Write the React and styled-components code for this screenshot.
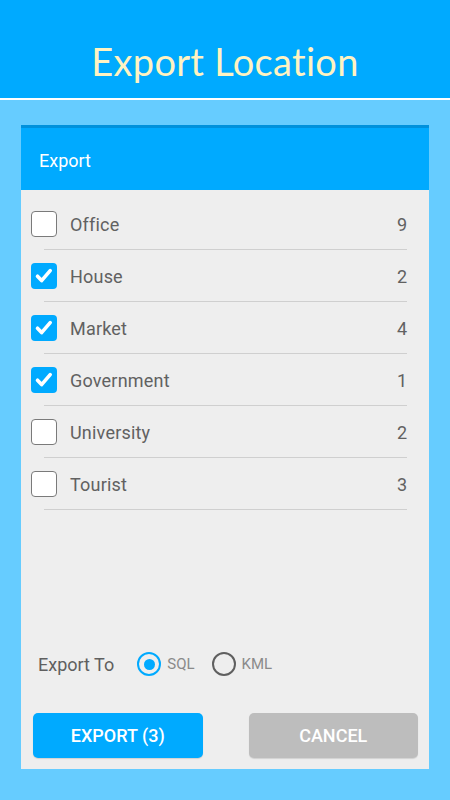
import React, { useState } from "react";
import styled, { createGlobalStyle } from "styled-components";

const Global = createGlobalStyle`
  html, body { margin: 0; padding: 0; }
  body { background: #66ccff; font-family: Roboto, "Noto Sans", sans-serif; }
  * { box-sizing: border-box; }
`;

const Page = styled.div`
  width: 450px;
  height: 800px;
  display: flex;
  flex-direction: column;
  background: #66ccff;
`;

const TopBar = styled.header`
  height: 100px;
  flex: none;
  background: #00aaff;
  border-bottom: 2px solid #ffffff;
  display: flex;
  justify-content: center;
  padding-top: 39px;
`;

const Title = styled.h1`
  margin: 0;
  height: 44px;
  line-height: 44px;
  font-family: Lato, "Open Sans", sans-serif;
  font-weight: 400;
  font-size: 38px;
  letter-spacing: 0.3px;
  color: #fff3c2;
`;

const Content = styled.main`
  flex: 1;
  display: flex;
  padding: 25px 21px 31px;
`;

const Card = styled.section`
  flex: 1;
  display: flex;
  flex-direction: column;
  background: #eeeeee;
`;

const CardHeader = styled.div`
  height: 65px;
  flex: none;
  background: #00aaff;
  border-top: 3px solid #0091dc;
  display: flex;
  align-items: center;
  padding: 3px 18px 0;
  font-size: 18px;
  color: #ffffff;
`;

const List = styled.ul`
  list-style: none;
  margin: 0;
  padding: 8px 0 0;
`;

const Item = styled.li`
  display: flex;
  flex-direction: column;
`;

const Row = styled.label`
  height: 51px;
  display: flex;
  align-items: center;
  padding: 0 22px 0 10px;
  cursor: pointer;
`;

const Box = styled.span`
  width: 26px;
  height: 26px;
  flex: none;
  border-radius: 4px;
  display: flex;
  align-items: center;
  justify-content: center;
  background: ${(p) => (p.$checked ? "#00aaff" : "#ffffff")};
  border: ${(p) => (p.$checked ? "none" : "1px solid #7a7a7a")};
`;

const Label = styled.span`
  flex: 1;
  margin-left: 13px;
  padding-top: 2px;
  font-size: 18px;
  color: #616161;
  letter-spacing: 0.2px;
`;

const Count = styled.span`
  padding-top: 2px;
  font-size: 18px;
  color: #616161;
`;

const Divider = styled.div`
  height: 1px;
  margin: 0 22px 0 23px;
  background: #cfcfcf;
`;

const Spacer = styled.div`
  flex: 1;
`;

const ExportTo = styled.div`
  height: 42px;
  display: flex;
  align-items: center;
  padding-left: 17px;
  margin-bottom: 28px;
`;

const ExportLabel = styled.span`
  font-size: 18px;
  color: #5f5f5f;
  margin-right: 23px;
`;

const RadioOption = styled.label`
  display: flex;
  align-items: center;
  margin-right: 17px;
`;

const RadioCircle = styled.span`
  width: 24px;
  height: 24px;
  border-radius: 50%;
  border: 2.5px solid ${(p) => (p.$on ? "#00aaff" : "#5f5f5f")};
  display: flex;
  align-items: center;
  justify-content: center;
  &::after {
    content: "";
    width: 11px;
    height: 11px;
    border-radius: 50%;
    background: ${(p) => (p.$on ? "#00aaff" : "transparent")};
  }
`;

const RadioText = styled.span`
  margin-left: 6px;
  font-size: 15px;
  color: #8a8a8a;
`;

const Buttons = styled.div`
  display: flex;
  gap: 46px;
  padding: 0 11px 11px 12px;
`;

const Button = styled.button`
  flex: 1;
  height: 45px;
  border: none;
  border-radius: 5px;
  font-family: Roboto, sans-serif;
  font-weight: 500;
  font-size: 18px;
  color: #ffffff;
  background: ${(p) => (p.$primary ? "#00aaff" : "#bdbdbd")};
  box-shadow: 0 1px 1px rgba(0, 0, 0, 0.12);
  text-transform: uppercase;
`;

const Check = () => (
  <svg width="26" height="26" viewBox="0 0 26 26">
    <path
      d="M6.5 13.2 L10.6 17.6 L19.2 7.6"
      fill="none"
      stroke="#ffffff"
      strokeWidth="3.6"
      strokeLinecap="round"
      strokeLinejoin="round"
    />
  </svg>
);

const initial = [
  { name: "Office", count: 9, on: false },
  { name: "House", count: 2, on: true },
  { name: "Market", count: 4, on: true },
  { name: "Government", count: 1, on: true },
  { name: "University", count: 2, on: false },
  { name: "Tourist", count: 3, on: false },
];

export default function App() {
  const [items, setItems] = useState(initial);
  const [target, setTarget] = useState("SQL");
  const selected = items.filter((i) => i.on).length;

  return (
    <>
      <Global />
      <Page>
        <TopBar>
          <Title>Export Location</Title>
        </TopBar>
        <Content>
          <Card>
            <CardHeader>Export</CardHeader>
            <List>
              {items.map((it, idx) => (
                <Item key={it.name}>
                  <Row
                    onClick={() =>
                      setItems(items.map((x, j) => (j === idx ? { ...x, on: !x.on } : x)))
                    }
                  >
                    <Box $checked={it.on}>{it.on && <Check />}</Box>
                    <Label>{it.name}</Label>
                    <Count>{it.count}</Count>
                  </Row>
                  <Divider />
                </Item>
              ))}
            </List>
            <Spacer />
            <ExportTo>
              <ExportLabel>Export To</ExportLabel>
              {["SQL", "KML"].map((t) => (
                <RadioOption key={t} onClick={() => setTarget(t)}>
                  <RadioCircle $on={target === t} />
                  <RadioText>{t}</RadioText>
                </RadioOption>
              ))}
            </ExportTo>
            <Buttons>
              <Button $primary>Export ({selected})</Button>
              <Button>Cancel</Button>
            </Buttons>
          </Card>
        </Content>
      </Page>
    </>
  );
}
